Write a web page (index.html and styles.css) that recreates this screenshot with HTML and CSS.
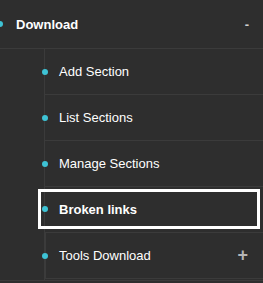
FILE: index.html
```html
<!DOCTYPE html>
<html lang="en">
<head>
    <meta charset="UTF-8">
    <meta name="viewport" content="width=device-width, initial-scale=1.0">
    <title>Sidebar Menu</title>
    <link rel="stylesheet" href="styles.css">
</head>
<body>
    <ul class="menu">
        <li class="menu-item open">
            <a class="menu-head" href="#">
                <span class="label">Download</span>
                <span class="toggle">-</span>
            </a>
            <ul class="sub-menu">
                <li class="sub-item"><a href="#">Add Section</a></li>
                <li class="sub-item"><a href="#">List Sections</a></li>
                <li class="sub-item"><a href="#">Manage Sections</a></li>
                <li class="sub-item active"><a href="#">Broken links</a></li>
                <li class="sub-item has-children">
                    <a href="#">
                        <span class="label">Tools Download</span>
                        <span class="toggle plus">+</span>
                    </a>
                </li>
            </ul>
        </li>
    </ul>
</body>
</html>
```

FILE: styles.css
```css
body {
    margin: 0;
    padding: 0;
    background-color: #2e2e2e;
    font-family: "Liberation Sans", Arial, sans-serif;
    font-size: 13px;
    color: #fff;
}
ul {
    list-style: none;
    margin: 0;
    padding: 0;
}
a {
    color: #fff;
    text-decoration: none;
}
.menu-item {
    border-bottom: 1px solid #3b3b3b;
}
.menu-head {
    position: relative;
    display: flex;
    align-items: center;
    justify-content: space-between;
    height: 48px;
    padding: 0 14px 0 16px;
    border-bottom: 1px solid #3b3b3b;
    font-weight: bold;
}
.menu-head::before {
    content: "";
    position: absolute;
    left: -3px;
    top: 21px;
    width: 6px;
    height: 6px;
    border-radius: 50%;
    background: #3ec3d5;
}
.toggle {
    color: #d0d0d0;
    font-weight: bold;
}
.sub-menu {
    margin-left: 44px;
    border-left: 1px solid #3b3b3b;
    padding-bottom: 1px;
}
.sub-item {
    position: relative;
    border-bottom: 1px solid #3b3b3b;
}
.sub-item::before {
    content: "";
    position: absolute;
    left: -3px;
    top: 50%;
    width: 6px;
    height: 6px;
    margin-top: -3px;
    border-radius: 50%;
    background: #3ec3d5;
    z-index: 1;
}
.sub-item a {
    display: flex;
    align-items: center;
    justify-content: space-between;
    height: 45px;
    padding: 0 15px 0 14px;
}
.sub-item.active {
    border-bottom: none;
}
.sub-item.active a {
    box-sizing: border-box;
    height: 40px;
    margin: 2px 3px 3px -7px;
    padding-left: 18px;
    border: 3px solid #fff;
    font-weight: bold;
}
.sub-item.has-children {
    border: 1px solid #3b3b3b;
    border-right: none;
}
.sub-item.has-children::before {
    left: -4px;
}
.sub-item.has-children a {
    padding-left: 13px;
}
.plus {
    font-size: 18px;
    font-weight: bold;
    color: #b5b5b5;
}
```
